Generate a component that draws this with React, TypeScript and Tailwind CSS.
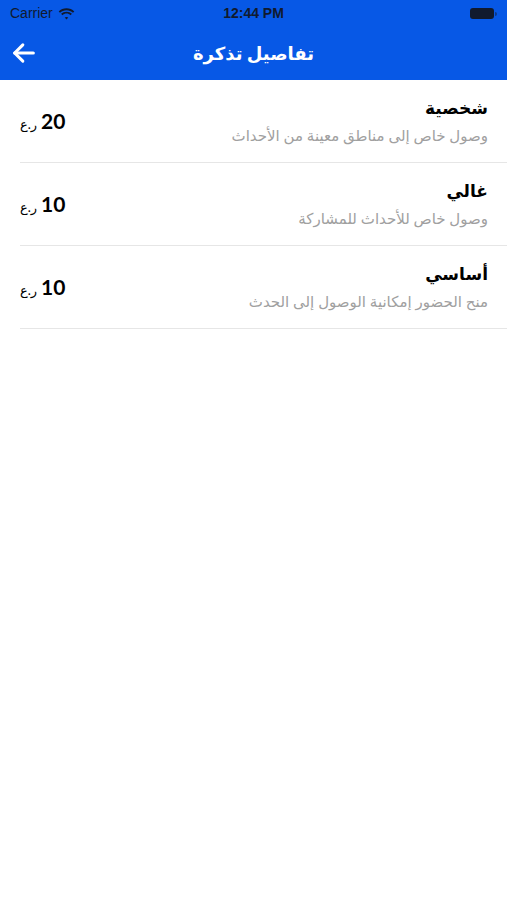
import React from 'react';

type Ticket = {
  name: string;
  desc: string;
  price: number;
};

const tickets: Ticket[] = [
  { name: 'شخصية', desc: 'وصول خاص إلى مناطق معينة من الأحداث', price: 20 },
  { name: 'غالي', desc: 'وصول خاص للأحداث للمشاركة', price: 10 },
  { name: 'أساسي', desc: 'منح الحضور إمكانية الوصول إلى الحدث', price: 10 },
];

const arabicFont = "font-['Lato','DejaVu_Sans',sans-serif]";

function StatusBar() {
  return (
    <div className="h-[27px] flex items-center justify-between px-[10px] text-[#111a2e] font-['Liberation_Sans',sans-serif]">
      <div className="flex items-center gap-[5px] w-[120px]">
        <span className="text-[14px]">Carrier</span>
        <svg width="17" height="12" viewBox="0 0 17 12" fill="#111a2e">
          <path d="M8.5 2.2c2.5 0 4.8 1 6.5 2.6l1.3-1.4C14.3 1.5 11.5.3 8.5.3S2.7 1.5.7 3.4L2 4.8c1.7-1.6 4-2.6 6.5-2.6z" />
          <path d="M8.5 5.6c1.6 0 3 .6 4.1 1.6l1.3-1.4C12.5 4.5 10.6 3.7 8.5 3.7S4.5 4.5 3.1 5.8l1.3 1.4c1.1-1 2.5-1.6 4.1-1.6z" />
          <path d="M8.5 8.9c.7 0 1.3.3 1.8.7L8.5 11.6 6.7 9.6c.5-.4 1.1-.7 1.8-.7z" />
        </svg>
      </div>
      <span className="text-[14px] font-bold">12:44 PM</span>
      <div className="w-[120px] flex justify-end">
        <div className="flex items-center">
          <div className="w-[24px] h-[11px] rounded-[3px] bg-[#111a2e]" />
          <div className="w-[2px] h-[4px] rounded-r-sm bg-[#111a2e] opacity-50 ml-[1px]" />
        </div>
      </div>
    </div>
  );
}

function NavBar() {
  return (
    <div className="relative h-[53px] flex items-center justify-center">
      <button className="absolute left-[10px] top-[12px] text-white">
        <svg width="28" height="28" viewBox="0 0 24 24" fill="none" stroke="white" strokeWidth="2.6" strokeLinecap="round" strokeLinejoin="round">
          <path d="M20 12H4" />
          <path d="M11 5l-7 7 7 7" />
        </svg>
      </button>
      <h1 dir="rtl" className={`text-white text-[18px] font-bold ${arabicFont}`}>تفاصيل تذكرة</h1>
    </div>
  );
}

function TicketRow({ ticket }: { ticket: Ticket }) {
  return (
    <div className="ml-[20px] h-[83px] border-b border-[#e6e6e6] flex items-center justify-between pr-[19px]">
      <div className="flex items-baseline gap-[4px] font-['Lato','DejaVu_Sans',sans-serif] text-black">
        <span dir="rtl" className="text-[13px]">ر.ع</span>
        <span className="text-[21px] font-bold">{ticket.price}</span>
      </div>
      <div dir="rtl" className={`flex flex-col items-start ${arabicFont}`}>
        <span className="text-[17px] font-bold text-black leading-[28px]">{ticket.name}</span>
        <span className="text-[15px] text-[#a0a0a0] leading-[26px]">{ticket.desc}</span>
      </div>
    </div>
  );
}

export default function App() {
  return (
    <main className="w-[507px] h-[900px] bg-white overflow-hidden">
      <header className="bg-[#0758e6]">
        <StatusBar />
        <NavBar />
      </header>
      <div className="flex flex-col">
        {tickets.map((t, i) => (
          <TicketRow key={i} ticket={t} />
        ))}
      </div>
    </main>
  );
}
